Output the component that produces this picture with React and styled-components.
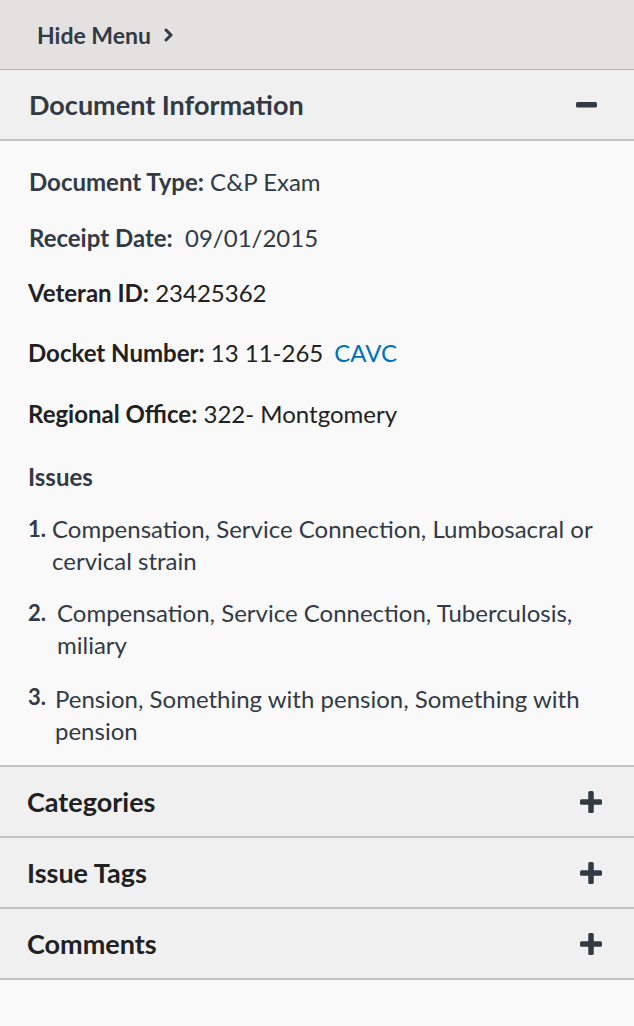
import React from "react";
import styled, { createGlobalStyle } from "styled-components";

const GlobalStyle = createGlobalStyle`
  html, body { margin: 0; padding: 0; }
  body {
    background: #f9f9f9;
    font-family: Lato, "Liberation Sans", sans-serif;
    color: #323a45;
  }
  * { box-sizing: border-box; }
`;

const Sidebar = styled.aside`
  width: 634px;
  min-height: 1026px;
  background: #f9f9f9;
`;

const HideBar = styled.div`
  height: 70px;
  background: #e4e2e0;
  border-bottom: 1px solid #b3b3b6;
  display: flex;
  align-items: center;
  padding-left: 37px;
  gap: 13px;
  font-weight: 700;
  font-size: 23px;
  color: #323a45;
`;

const SectionHeader = styled.div`
  height: 71px;
  background: #f0f0f0;
  border-bottom: 2px solid #c2c2c5;
  display: flex;
  align-items: center;
  justify-content: space-between;
  padding: 0 ${(p) => p.$padRight || 32}px 0 ${(p) => p.$indent || 27}px;
  font-weight: 700;
  font-size: 27px;
  color: ${(p) => p.$color || "#212121"};
`;

const Body = styled.div`
  padding: 26px 27px 18px 28px;
  border-bottom: 2px solid #c2c2c5;
`;

const Row = styled.div`
  font-size: 24px;
  line-height: 30px;
  margin-top: ${(p) => p.$top || 0}px;
  padding-left: ${(p) => p.$indent || 0}px;
  color: ${(p) => p.$color || "#212121"};
`;

const Label = styled.strong`
  font-weight: 700;
`;

const Link = styled.a`
  color: #0071bb;
  text-decoration: none;
  margin-left: 11px;
`;

const IssuesTitle = styled.div`
  font-size: 24px;
  font-weight: 700;
  line-height: 30px;
  margin-top: 33px;
  color: #323a45;
`;

const IssueList = styled.ol`
  list-style: none;
  margin: 0;
  padding: 0;
`;

const IssueItem = styled.li`
  display: grid;
  grid-template-columns: auto 1fr;
  column-gap: ${(p) => p.$gap}px;
  font-size: 24px;
  line-height: 32px;
  margin-top: ${(p) => p.$top}px;
  color: #323a45;
`;

const Num = styled.span`
  font-weight: 700;
  font-size: 22px;
  position: relative;
  top: ${(p) => p.$shift || 0}px;
`;

const Icon = styled.svg`
  display: block;
  flex: none;
`;

const Chevron = () => (
  <Icon width="10" height="14" viewBox="0 0 10 14">
    <path d="M2 2l5 5-5 5" fill="none" stroke="#323a45" strokeWidth="3" strokeLinecap="round" strokeLinejoin="round" />
  </Icon>
);

const Minus = () => (
  <Icon width="21" height="21" viewBox="0 0 21 21">
    <rect x="0" y="8" width="21" height="5.5" rx="1.5" fill="#323a45" />
  </Icon>
);

const Plus = () => (
  <Icon width="22" height="22" viewBox="0 0 22 22">
    <rect x="0" y="8.25" width="22" height="5.5" rx="1.5" fill="#323a45" />
    <rect x="8.25" y="0" width="5.5" height="22" rx="1.5" fill="#323a45" />
  </Icon>
);

const issues = [
  { text: "Compensation, Service Connection, Lumbosacral or cervical strain", gap: 6, top: 21, shift: 0 },
  { text: "Compensation, Service Connection, Tuberculosis, miliary", gap: 11, top: 20, shift: 0 },
  { text: "Pension, Something with pension, Something with pension", gap: 9, top: 22, shift: -2 },
];

export default function App() {
  return (
    <>
      <GlobalStyle />
      <Sidebar>
        <HideBar>
          <span>Hide Menu</span>
          <Chevron />
        </HideBar>
        <SectionHeader $indent={29} $padRight={37} $color="#323a45">
          <span>Document Information</span>
          <Minus />
        </SectionHeader>
        <Body>
          <Row $indent={1} $color="#323a45">
            <Label>Document Type:</Label> C&amp;P Exam
          </Row>
          <Row $top={26} $indent={1} $color="#323a45">
            <Label>Receipt Date:</Label>&nbsp; 09/01/2015
          </Row>
          <Row $top={25}>
            <Label>Veteran ID:</Label> 23425362
          </Row>
          <Row $top={30}>
            <Label>Docket Number:</Label> 13 11-265
            <Link href="#">CAVC</Link>
          </Row>
          <Row $top={31}>
            <Label>Regional Office:</Label> 322- Montgomery
          </Row>
          <IssuesTitle>Issues</IssuesTitle>
          <IssueList>
            {issues.map((it, i) => (
              <IssueItem key={i} $gap={it.gap} $top={it.top}>
                <Num $shift={it.shift}>{i + 1}.</Num>
                <span>{it.text}</span>
              </IssueItem>
            ))}
          </IssueList>
        </Body>
        <SectionHeader>
          <span>Categories</span>
          <Plus />
        </SectionHeader>
        <SectionHeader>
          <span>Issue Tags</span>
          <Plus />
        </SectionHeader>
        <SectionHeader>
          <span>Comments</span>
          <Plus />
        </SectionHeader>
      </Sidebar>
    </>
  );
}
